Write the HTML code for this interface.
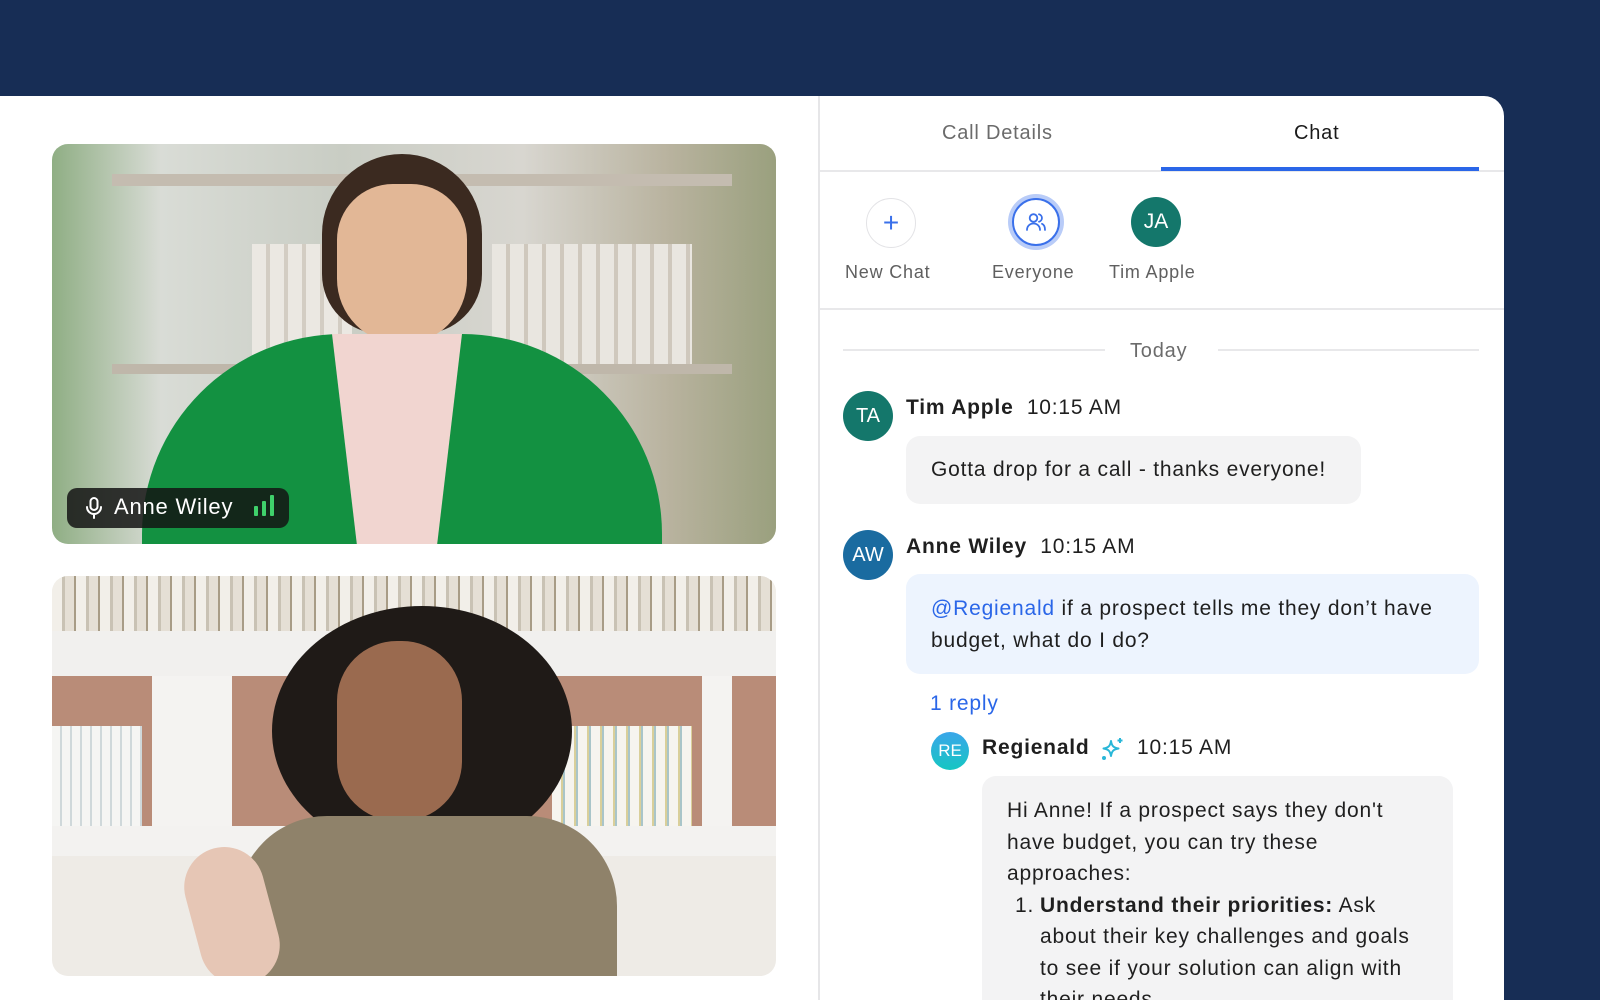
<!DOCTYPE html>
<html style="overflow:hidden;height:1000px"><head><meta charset="utf-8"><style>
*{margin:0;padding:0;box-sizing:border-box}
body{width:1600px;height:1000px;background:#172d55;font-family:"Liberation Sans",sans-serif;position:relative;overflow:hidden;color:#1f1f1f;letter-spacing:0.8px}
.panel{position:absolute;left:0;top:96px;width:1504px;height:904px;background:#fff;border-top-right-radius:20px}
.div{position:absolute;left:818px;top:96px;width:2px;height:904px;background:#e6e6e8}
.abs{position:absolute}
.vid{position:absolute;left:52px;width:724px;height:400px;border-radius:16px;overflow:hidden}
.t{position:absolute;white-space:nowrap}
.hl{position:absolute;height:2px;background:#e8e8ea}
.av{position:absolute;border-radius:50%;color:#fff;display:flex;align-items:center;justify-content:center;font-size:20px;letter-spacing:0}
.bub{position:absolute;border-radius:14px;font-size:21px;line-height:31.5px;padding:0 25px;overflow:hidden}
</style></head><body>
<div class="panel"></div>
<div class="div"></div>

<div class="vid" style="top:144px;background:linear-gradient(90deg,#8fae84 0%,#d9dcd6 15%,#c9cdc4 40%,#d8d6d0 65%,#b9b39f 85%,#9aa07e 100%)">
  <div class="abs" style="left:60px;top:30px;width:620px;height:12px;background:#c4bcb0"></div>
  <div class="abs" style="left:60px;top:220px;width:620px;height:10px;background:#bfb7aa"></div>
  <div class="abs" style="left:440px;top:100px;width:200px;height:120px;background:repeating-linear-gradient(90deg,#e9e6e0 0 14px,#cfc8bd 14px 18px)"></div>
  <div class="abs" style="left:200px;top:100px;width:100px;height:120px;background:repeating-linear-gradient(90deg,#ebe8e2 0 14px,#d3cdc3 14px 18px)"></div>
  <div class="abs" style="left:270px;top:10px;width:160px;height:180px;border-radius:80px 80px 60px 60px;background:#3b2a20"></div>
  <div class="abs" style="left:285px;top:40px;width:130px;height:160px;border-radius:60px 60px 70px 70px;background:#e2b796"></div>
  <div class="abs" style="left:90px;top:190px;width:520px;height:260px;border-radius:200px 200px 0 0;background:#139141"></div>
  <div class="abs" style="left:280px;top:190px;width:130px;height:220px;background:#f1d5d0;clip-path:polygon(0 0,100% 0,80% 100%,20% 100%)"></div>
  <div class="abs" style="left:15px;top:344px;width:222px;height:40px;border-radius:10px;background:rgba(20,20,20,.85)"></div>
  <svg class="abs" style="left:32px;top:352px" width="20" height="24" viewBox="0 0 20 24" fill="none" stroke="#fff" stroke-width="2" stroke-linecap="round"><rect x="6.5" y="2" width="7" height="12" rx="3.5"/><path d="M3 11a7 7 0 0 0 14 0M10 18v4"/></svg>
  <div class="t" style="left:62px;top:350px;font-size:22px;color:#fff">Anne Wiley</div>
  <div class="abs" style="left:202px;top:362px;width:4px;height:10px;background:#3fd16b;border-radius:1px"></div>
  <div class="abs" style="left:210px;top:357px;width:4px;height:15px;background:#3fd16b;border-radius:1px"></div>
  <div class="abs" style="left:218px;top:351px;width:4px;height:21px;background:#3fd16b;border-radius:1px"></div>
</div>

<div class="vid" style="top:576px;background:#eeebe6">
  <div class="abs" style="left:0;top:0;width:724px;height:55px;background:repeating-linear-gradient(90deg,#f2efe9 0 10px,#c9c2b4 10px 13px,#e5dfd5 13px 22px,#a89c86 22px 24px)"></div>
  <div class="abs" style="left:0;top:55px;width:724px;height:45px;background:#f1f0ee"></div>
  <div class="abs" style="left:0;top:100px;width:724px;height:150px;background:#b98c78"></div>
  <div class="abs" style="left:100px;top:100px;width:80px;height:150px;background:#f4f3f1"></div>
  <div class="abs" style="left:650px;top:100px;width:30px;height:150px;background:#f4f3f1"></div>
  <div class="abs" style="left:0;top:150px;width:90px;height:100px;background:repeating-linear-gradient(90deg,#f5f5f3 0 8px,#cfd8da 8px 10px)"></div>
  <div class="abs" style="left:500px;top:150px;width:140px;height:100px;background:repeating-linear-gradient(90deg,#f6f4ef 0 9px,#d9cf9a 9px 11px,#a9c5c9 11px 13px)"></div>
  <div class="abs" style="left:0;top:250px;width:724px;height:30px;background:#f3f2f0"></div>
  <div class="abs" style="left:220px;top:30px;width:300px;height:250px;border-radius:50%;background:#1f1a17"></div>
  <div class="abs" style="left:285px;top:65px;width:125px;height:180px;border-radius:60px;background:#9a6a4f"></div>
  <div class="abs" style="left:185px;top:240px;width:380px;height:200px;border-radius:90px 90px 0 0;background:#8f826a"></div>
  <div class="abs" style="left:140px;top:270px;width:80px;height:140px;border-radius:40px;background:#e6c6b5;transform:rotate(-15deg)"></div>
</div>

<div class="t" style="left:942px;top:122px;font-size:20px;color:#6b6b6b">Call Details</div>
<div class="t" style="left:1294px;top:122px;font-size:20px;color:#1a1a1a">Chat</div>
<div class="hl" style="left:820px;top:170px;width:684px"></div>
<div class="abs" style="left:1161px;top:167px;width:318px;height:4px;background:#2a66e8"></div>

<div class="av" style="left:866px;top:198px;width:50px;height:50px;border:1.5px solid #e3e3e6;background:#fff;color:#3a70ea;font-size:28px;font-weight:300">+</div>
<div class="av" style="left:1008px;top:194px;width:56px;height:56px;background:#b9ccf8"></div>
<div class="av" style="left:1012px;top:198px;width:48px;height:48px;background:#fff;border:2px solid #3a70ea">
<svg width="24" height="24" viewBox="0 0 24 24" fill="none" stroke="#3a70ea" stroke-width="1.8" stroke-linecap="round"><circle cx="9.5" cy="8" r="3.8"/><path d="M3 20c0-4 3-6.5 6.5-6.5S16 16 16 20M15 4.3a3.8 3.8 0 0 1 0 7.4M18 13.8c2 .8 3 3 3 6.2"/></svg></div>
<div class="av" style="left:1131px;top:197px;width:50px;height:50px;background:#14776b;font-size:21px">JA</div>
<div class="t" style="left:845px;top:262px;font-size:18px;color:#5f5f5f">New Chat</div>
<div class="t" style="left:992px;top:262px;font-size:18px;color:#5f5f5f">Everyone</div>
<div class="t" style="left:1109px;top:262px;font-size:18px;color:#5f5f5f">Tim Apple</div>
<div class="hl" style="left:820px;top:308px;width:684px"></div>

<div class="hl" style="left:843px;top:349px;width:262px"></div>
<div class="hl" style="left:1218px;top:349px;width:261px"></div>
<div class="t" style="left:1130px;top:340px;font-size:20px;color:#6b6b6b">Today</div>

<div class="av" style="left:843px;top:391px;width:50px;height:50px;background:#14776b">TA</div>
<div class="t" style="left:906px;top:396px;font-size:21px"><b>Tim Apple</b>&nbsp; 10:15 AM</div>
<div class="bub" style="left:906px;top:436px;width:455px;height:68px;background:#f3f3f4;line-height:68px">Gotta drop for a call - thanks everyone!</div>

<div class="av" style="left:843px;top:530px;width:50px;height:50px;background:#1a6ba0">AW</div>
<div class="t" style="left:906px;top:535px;font-size:21px"><b>Anne Wiley</b>&nbsp; 10:15 AM</div>
<div class="bub" style="left:906px;top:574px;width:573px;height:100px;background:#edf4fe;padding-top:19px"><span style="color:#2a66e8">@Regienald</span> if a prospect tells me they don’t have budget, what do I do?</div>

<div class="t" style="left:930px;top:692px;font-size:21px;color:#2a66e8">1 reply</div>
<div class="av" style="left:931px;top:732px;width:38px;height:38px;background:linear-gradient(180deg,#3aa6ea,#16c6c2);font-size:17px">RE</div>
<div class="t" style="left:982px;top:736px;font-size:21px"><b>Regienald</b></div>
<svg class="abs" style="left:1100px;top:736px" width="26" height="26" viewBox="0 0 26 26" fill="none" stroke="#29b7d8" stroke-width="2" stroke-linejoin="round"><path d="M11 5c.8 5 2.5 6.7 7.5 7.5-5 .8-6.7 2.5-7.5 7.5-.8-5-2.5-6.7-7.5-7.5C8.5 11.7 10.2 10 11 5z"/><path d="M20 2v5M17.5 4.5h5"/><circle cx="4" cy="22" r="1" fill="#29b7d8"/></svg>
<div class="t" style="left:1137px;top:736px;font-size:21px">10:15 AM</div>
<div class="bub" style="left:982px;top:776px;width:471px;height:224px;border-radius:14px 14px 0 0;background:#f3f3f4;padding-top:19px">Hi Anne! If a prospect says they don't have budget, you can try these approaches:<br>
<div style="padding-left:33px;position:relative"><span style="position:absolute;left:8px">1.</span><b>Understand their priorities:</b> Ask about their key challenges and goals to see if your solution can align with their needs.</div></div>
</body></html>
